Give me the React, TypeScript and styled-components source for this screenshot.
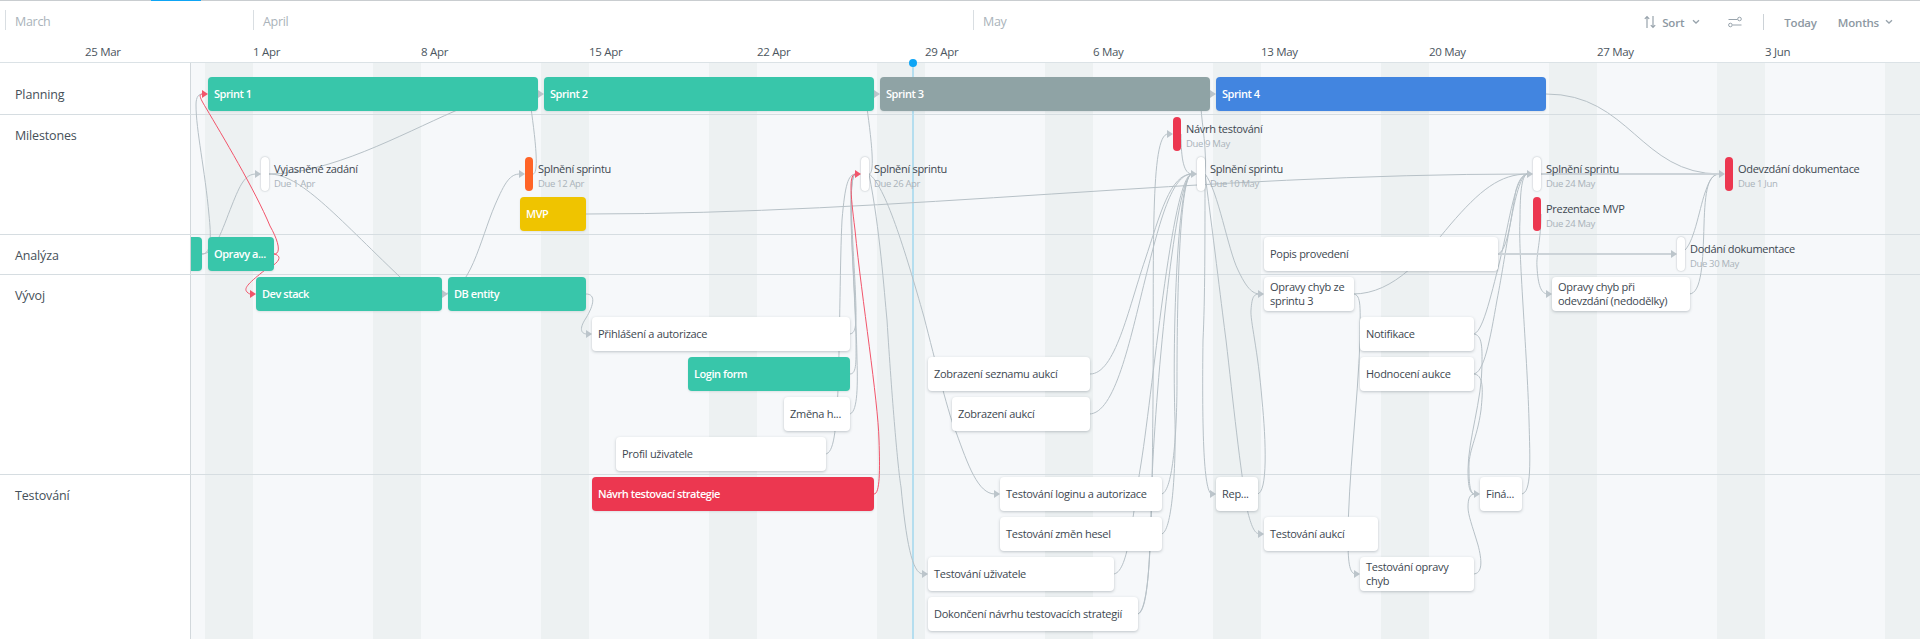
import styled, { createGlobalStyle } from "styled-components";

const TRACK_LEFT = 191;
const LANE_HEIGHT = 40;

type Tone = "green" | "gray" | "blue" | "yellow" | "red" | "white";

interface TaskType {
  label: string;
  x: number;
  end: number;
  lane: number;
  tone: Tone;
  cut?: boolean;
}

interface MilestoneType {
  label: string;
  due: string;
  x: number;
  lane: number;
  tone: "white" | "red" | "orange";
}

interface SwimlaneType {
  name: string;
  height: number;
  labelTop: number;
  laneTop: number;
  tasks: TaskType[];
  milestones: MilestoneType[];
}

const months = [
  { name: "March", width: 248 },
  { name: "April", width: 720 },
  { name: "May" },
];

const weeks = ["25 Mar", "1 Apr", "8 Apr", "15 Apr", "22 Apr", "29 Apr", "6 May", "13 May", "20 May", "27 May", "3 Jun"];

const swimlanes: SwimlaneType[] = [
  {
    name: "Planning",
    height: 51,
    labelTop: 23,
    laneTop: 14,
    tasks: [
      { label: "Sprint 1", x: 208, end: 538, lane: 0, tone: "green" },
      { label: "Sprint 2", x: 544, end: 874, lane: 0, tone: "green" },
      { label: "Sprint 3", x: 880, end: 1210, lane: 0, tone: "gray" },
      { label: "Sprint 4", x: 1216, end: 1546, lane: 0, tone: "blue" },
    ],
    milestones: [],
  },
  {
    name: "Milestones",
    height: 119,
    labelTop: 12,
    laneTop: 2,
    tasks: [{ label: "MVP", x: 520, end: 586, lane: 2, tone: "yellow" }],
    milestones: [
      { label: "Návrh testování", due: "Due 9 May", x: 1173, lane: 0, tone: "red" },
      { label: "Vyjasněné zadání", due: "Due 1 Apr", x: 261, lane: 1, tone: "white" },
      { label: "Splnění sprintu", due: "Due 12 Apr", x: 525, lane: 1, tone: "orange" },
      { label: "Splnění sprintu", due: "Due 26 Apr", x: 861, lane: 1, tone: "white" },
      { label: "Splnění sprintu", due: "Due 10 May", x: 1197, lane: 1, tone: "white" },
      { label: "Splnění sprintu", due: "Due 24 May", x: 1533, lane: 1, tone: "white" },
      { label: "Odevzdání dokumentace", due: "Due 1 Jun", x: 1725, lane: 1, tone: "red" },
      { label: "Prezentace MVP", due: "Due 24 May", x: 1533, lane: 2, tone: "red" },
    ],
  },
  {
    name: "Analýza",
    height: 39,
    labelTop: 12,
    laneTop: 2,
    tasks: [
      { label: "", x: 191, end: 202, lane: 0, tone: "green", cut: true },
      { label: "Opravy a...", x: 208, end: 274, lane: 0, tone: "green" },
      { label: "Popis provedení", x: 1264, end: 1498, lane: 0, tone: "white" },
    ],
    milestones: [{ label: "Dodání dokumentace", due: "Due 30 May", x: 1677, lane: 0, tone: "white" }],
  },
  {
    name: "Vývoj",
    height: 199,
    labelTop: 12,
    laneTop: 2,
    tasks: [
      { label: "Dev stack", x: 256, end: 442, lane: 0, tone: "green" },
      { label: "DB entity", x: 448, end: 586, lane: 0, tone: "green" },
      { label: "Opravy chyb ze sprintu 3", x: 1264, end: 1354, lane: 0, tone: "white" },
      { label: "Opravy chyb při odevzdání (nedodělky)", x: 1552, end: 1690, lane: 0, tone: "white" },
      { label: "Přihlášení a autorizace", x: 592, end: 850, lane: 1, tone: "white" },
      { label: "Notifikace", x: 1360, end: 1474, lane: 1, tone: "white" },
      { label: "Login form", x: 688, end: 850, lane: 2, tone: "green" },
      { label: "Zobrazení seznamu aukcí", x: 928, end: 1090, lane: 2, tone: "white" },
      { label: "Hodnocení aukce", x: 1360, end: 1474, lane: 2, tone: "white" },
      { label: "Změna h...", x: 784, end: 850, lane: 3, tone: "white" },
      { label: "Zobrazení aukcí", x: 952, end: 1090, lane: 3, tone: "white" },
      { label: "Profil uživatele", x: 616, end: 826, lane: 4, tone: "white" },
    ],
    milestones: [],
  },
  {
    name: "Testování",
    height: 164,
    labelTop: 12,
    laneTop: 2,
    tasks: [
      { label: "Návrh testovací strategie", x: 592, end: 874, lane: 0, tone: "red" },
      { label: "Testování loginu a autorizace", x: 1000, end: 1162, lane: 0, tone: "white" },
      { label: "Rep...", x: 1216, end: 1258, lane: 0, tone: "white" },
      { label: "Finá...", x: 1480, end: 1522, lane: 0, tone: "white" },
      { label: "Testování změn hesel", x: 1000, end: 1162, lane: 1, tone: "white" },
      { label: "Testování aukcí", x: 1264, end: 1378, lane: 1, tone: "white" },
      { label: "Testování uživatele", x: 928, end: 1114, lane: 2, tone: "white" },
      { label: "Testování opravy chyb", x: 1360, end: 1474, lane: 2, tone: "white" },
      { label: "Dokončení návrhu testovacích strategií", x: 928, end: 1138, lane: 3, tone: "white" },
    ],
    milestones: [],
  },
];

// dependency curves, in page coordinates
const links = [
  "M202,254 C212,254 211,235 209,215 C205,170 196,130 196,105 C196,96 199,94 203,94",
  "M202,254 C215,254 222,230 232,205 C240,185 245,174 256,174",
  "M269,174 C300,174 335,215 400,277 C420,294 430,294 443,294",
  "M269,174 C330,174 400,135 455,111 C490,96 515,94 539,94",
  "M533,174 C540,174 534,130 531,108 C529,98 532,94 539,94",
  "M442,294 C470,294 480,240 495,205 C505,182 510,174 520,174",
  "M586,294 C596,294 594,305 586,318 C578,330 582,334 587,334",
  "M869,174 C876,174 870,130 867,108 C865,98 868,94 875,94",
  "M869,174 C880,230 884,290 887,320 C892,400 898,470 901,487 C906,540 912,574 923,574",
  "M869,174 C885,185 905,250 924,317 C935,360 950,420 956,432 C968,465 978,494 995,494",
  "M849,334 C856,334 856,325 856,310 C855,260 846,174 856,174",
  "M850,374 C857,374 856,360 856,340 C855,280 845,174 856,174",
  "M849,414 C857,414 858,390 857,360 C856,290 845,174 856,174",
  "M825,454 C834,454 836,430 838,390 C840,330 840,260 842,220 C845,185 848,174 856,174",
  "M586,214 C900,214 1200,174 1528,174",
  "M1090,374 C1115,374 1128,310 1145,260 C1160,215 1170,174 1192,174",
  "M1089,414 C1115,414 1130,340 1145,280 C1160,220 1172,174 1192,174",
  "M1161,494 C1172,494 1177,440 1177,380 C1177,290 1180,174 1192,174",
  "M1161,534 C1172,534 1176,470 1175,420 C1172,330 1178,174 1192,174",
  "M1113,574 C1128,574 1132,520 1140,470 C1152,400 1172,174 1192,174",
  "M1137,614 C1150,614 1150,540 1152,480 C1156,380 1176,174 1192,174",
  "M1137,614 C1152,614 1152,500 1153,400 C1154,250 1150,134 1168,134",
  "M1181,134 C1181,160 1184,174 1192,174",
  "M1205,174 C1205,240 1205,300 1203,340 C1202,420 1203,494 1212,494",
  "M1205,174 C1215,250 1222,310 1226,340 C1233,400 1240,470 1248,513 C1252,528 1255,534 1260,534",
  "M1205,174 C1218,190 1228,250 1238,270 C1246,287 1252,294 1260,294",
  "M1205,174 C1207,150 1202,125 1201,108 C1200,98 1203,94 1211,94",
  "M1257,494 C1268,494 1266,440 1262,400 C1258,350 1250,320 1251,310 C1252,296 1254,294 1260,294",
  "M1353,294 C1395,294 1425,255 1450,225 C1480,190 1500,174 1528,174",
  "M1353,294 C1362,294 1360,310 1360,340 C1358,400 1348,480 1348,540 C1348,565 1350,574 1356,574",
  "M1497,254 C1508,254 1512,210 1516,190 C1520,176 1525,174 1528,174",
  "M1473,334 C1482,334 1490,300 1500,260 C1510,220 1515,174 1528,174",
  "M1473,374 C1484,374 1490,340 1497,300 C1507,250 1515,174 1528,174",
  "M1521,494 C1532,494 1530,460 1529,420 C1527,350 1518,250 1520,220 C1520,190 1522,174 1528,174",
  "M1473,334 C1483,334 1482,350 1482,365 C1482,400 1468,440 1468,470 C1468,488 1470,494 1475,494",
  "M1473,374 C1484,374 1483,390 1481,410 C1477,440 1468,450 1469,470 C1469,488 1471,494 1475,494",
  "M1473,574 C1483,574 1482,560 1478,545 C1472,525 1468,515 1468,507 C1468,498 1470,494 1475,494",
  "M1546,94 C1630,94 1640,174 1720,174",
  "M1685,250 C1695,240 1700,205 1706,190 C1710,178 1714,174 1720,174",
  "M1689,294 C1702,294 1703,260 1704,225 C1705,190 1708,174 1720,174",
  "M1541,214 C1541,240 1536,255 1537,267 C1538,285 1541,294 1548,294",
];

const heavyLinks = ["M1541,174 L1720,174", "M1497,254 L1672,254"];

const redLinks = [
  "M274,254 C282,254 278,240 270,226 C255,190 222,135 206,108 C200,98 198,94 203,94",
  "M274,254 C284,256 278,264 265,270 C250,282 243,288 247,292 C249,294 250,294 251,294",
  "M874,494 C880,494 880,470 879,440 C878,400 862,300 855,230 C850,190 849,174 856,174",
];

const arrows = [
  { x: 544, y: 94 },
  { x: 880, y: 94 },
  { x: 1216, y: 94 },
  { x: 261, y: 174 },
  { x: 525, y: 174 },
  { x: 448, y: 294 },
  { x: 592, y: 334 },
  { x: 1173, y: 134 },
  { x: 1197, y: 174 },
  { x: 1533, y: 174 },
  { x: 1725, y: 174 },
  { x: 1677, y: 254 },
  { x: 1264, y: 294 },
  { x: 1264, y: 534 },
  { x: 1216, y: 494 },
  { x: 1480, y: 494 },
  { x: 1000, y: 494 },
  { x: 928, y: 574 },
  { x: 1360, y: 574 },
  { x: 1552, y: 294 },
  { x: 208, y: 94, red: true },
  { x: 256, y: 294, red: true },
  { x: 861, y: 174, red: true },
];

const SortIcon = () => (
  <svg width="12" height="14" viewBox="0 0 12 14" fill="none" stroke="#98a3ac" strokeWidth="1.2">
    <path d="M3 13V1.5M.8 3.8 3 1.5l2.2 2.3M9 1v11.5M6.8 10.2 9 12.5l2.2-2.3" />
  </svg>
);

const FilterIcon = () => (
  <svg width="14" height="12" viewBox="0 0 14 12" fill="none" stroke="#98a3ac" strokeWidth="1">
    <path d="M.5 3.5h9M4.5 9h9" />
    <circle cx="11.5" cy="3" r="1.8" />
    <circle cx="2.4" cy="9" r="1.8" />
  </svg>
);

const Chevron = () => (
  <svg width="8" height="6" viewBox="0 0 8 6" fill="none" stroke="#98a3ac" strokeWidth="1.3">
    <path d="M1 1.2 4 4l3-2.8" />
  </svg>
);

const App = () => {
  return (
    <Page>
      <GlobalStyle />
      <TopLine>
        <ActiveTab />
      </TopLine>
      <MonthBar>
        {months.map((month) => (
          <Month key={month.name} $width={month.width}>
            {month.name}
          </Month>
        ))}
        <Controls>
          <SortIcon />
          <ControlLabel $left={6} $right={8}>
            Sort
          </ControlLabel>
          <Chevron />
          <FilterButton>
            <FilterIcon />
          </FilterButton>
          <Divider />
          <ControlLabel $left={20} $right={21}>
            Today
          </ControlLabel>
          <ControlLabel $left={0} $right={6}>
            Months
          </ControlLabel>
          <Chevron />
        </Controls>
      </MonthBar>
      <WeekBar>
        {weeks.map((week) => (
          <Week key={week}>{week}</Week>
        ))}
      </WeekBar>
      <Body>
        {swimlanes.map((lane) => (
          <Row key={lane.name} $height={lane.height}>
            <RowLabel $top={lane.labelTop}>{lane.name}</RowLabel>
            <Track>
              {lane.tasks.map((task) => (
                <Task
                  key={task.label + task.x}
                  $x={task.x}
                  $end={task.end}
                  $top={lane.laneTop + task.lane * LANE_HEIGHT}
                  $tone={task.tone}
                  $cut={task.cut}
                >
                  {task.label}
                </Task>
              ))}
              {lane.milestones.map((milestone) => (
                <Milestone
                  key={milestone.due + milestone.x}
                  $x={milestone.x}
                  $top={lane.laneTop + milestone.lane * LANE_HEIGHT}
                >
                  <Pin $tone={milestone.tone} />
                  <MilestoneText>
                    <MilestoneName>{milestone.label}</MilestoneName>
                    <MilestoneDue>{milestone.due}</MilestoneDue>
                  </MilestoneText>
                </Milestone>
              ))}
            </Track>
          </Row>
        ))}
        <TodayLine />
        <TodayDot />
        <Links viewBox="0 63 1920 576">
          {links.map((d) => (
            <Link key={d} d={d} />
          ))}
          {heavyLinks.map((d) => (
            <HeavyLink key={d} d={d} />
          ))}
          {redLinks.map((d) => (
            <RedLink key={d} d={d} />
          ))}
          {arrows.map((arrow) => (
            <Arrow
              key={`${arrow.x}-${arrow.y}`}
              $red={arrow.red}
              points={`${arrow.x},${arrow.y} ${arrow.x - 6},${arrow.y - 4} ${arrow.x - 6},${arrow.y + 4}`}
            />
          ))}
        </Links>
      </Body>
    </Page>
  );
};

const GlobalStyle = createGlobalStyle`
  html, body {
    margin: 0;
    padding: 0;
    background: #fff;
  }
  * {
    box-sizing: border-box;
  }
`;

const Page = styled.div`
  display: flex;
  flex-direction: column;
  width: 1920px;
  height: 639px;
  overflow: hidden;
  font-family: "Open Sans", "Noto Sans", sans-serif;
  color: #3d4750;
`;

const TopLine = styled.div`
  flex: none;
  height: 2px;
  padding-left: 151px;
  background: #fff;
  border-top: 1px solid #c9cdd0;
`;

const ActiveTab = styled.div`
  width: 50px;
  height: 1px;
  margin-top: -1px;
  background: #0ea5f5;
`;

const MonthBar = styled.div`
  flex: none;
  display: flex;
  align-items: flex-start;
  height: 38px;
  padding: 8px 27px 0 5px;
`;

const Month = styled.div<{ $width?: number }>`
  flex: ${(p) => (p.$width ? `0 0 ${p.$width}px` : "1")};
  height: 20px;
  padding-left: 9px;
  border-left: 1px solid #d9dee2;
  font-size: 12.5px;
  line-height: 23px;
  letter-spacing: -0.3px;
  color: #aab3ba;
`;

const Controls = styled.div`
  display: flex;
  align-items: center;
  height: 24px;
  color: #8d98a2;
`;

const ControlLabel = styled.span<{ $left: number; $right: number }>`
  margin: 0 ${(p) => p.$right}px 0 ${(p) => p.$left}px;
  font-size: 11.5px;
  font-weight: 600;
  letter-spacing: -0.2px;
`;

const FilterButton = styled.div`
  display: flex;
  margin: 0 21px 0 28px;
`;

const Divider = styled.div`
  width: 1px;
  height: 16px;
  background: #ccd2d7;
`;

const WeekBar = styled.div`
  flex: none;
  display: flex;
  height: 23px;
  padding-left: 85px;
  border-bottom: 1px solid #dbe2e6;
`;

const Week = styled.div`
  flex: 0 0 168px;
  font-size: 11.5px;
  line-height: 23px;
  letter-spacing: -0.3px;
  color: #4b5660;
`;

const Body = styled.div`
  position: relative;
  flex: 1;
  z-index: 0;
`;

const Row = styled.div<{ $height: number }>`
  display: flex;
  height: ${(p) => p.$height + 1}px;
  border-bottom: 1px solid #d6dde1;

  &:last-of-type {
    border-bottom: 0;
  }
`;

const RowLabel = styled.div<{ $top: number }>`
  flex: 0 0 191px;
  padding: ${(p) => p.$top}px 0 0 15px;
  border-right: 1px solid #d2d8dc;
  background: #fff;
  font-size: 12.5px;
  line-height: 18px;
  letter-spacing: -0.15px;
  color: #465059;
`;

const Track = styled.div`
  position: relative;
  flex: 1;
  background-color: #f6f8fa;
  background-image: linear-gradient(90deg, #edf1f2 48px, transparent 48px);
  background-size: 168px 100%;
  background-position: 14px 0;
`;

const toneColors: Record<Tone, string> = {
  green: "#38c6aa",
  gray: "#8fa3a5",
  blue: "#4285e0",
  yellow: "#efc400",
  red: "#ec3750",
  white: "#fff",
};

const Task = styled.div<{ $x: number; $end: number; $top: number; $tone: Tone; $cut?: boolean }>`
  position: absolute;
  z-index: 2;
  left: ${(p) => p.$x - TRACK_LEFT}px;
  top: ${(p) => p.$top}px;
  display: flex;
  align-items: center;
  width: ${(p) => p.$end - p.$x}px;
  height: 34px;
  padding: 0 5px 0 6px;
  border-radius: ${(p) => (p.$cut ? "0 4px 4px 0" : "4px")};
  background: ${(p) => toneColors[p.$tone]};
  box-shadow: ${(p) => (p.$tone === "white" ? "0 1px 3px rgba(60, 75, 85, 0.3)" : "0 1px 2px rgba(60, 75, 85, 0.12)")};
  font-size: 11px;
  line-height: 14px;
  letter-spacing: ${(p) => (p.$tone === "white" ? "-0.28px" : "-0.45px")};
  font-weight: ${(p) => (p.$tone === "white" ? 400 : 600)};
  color: ${(p) => (p.$tone === "white" ? "#3d4750" : "#fff")};
`;

const Milestone = styled.div<{ $x: number; $top: number }>`
  position: absolute;
  z-index: 2;
  left: ${(p) => p.$x - TRACK_LEFT}px;
  top: ${(p) => p.$top}px;
  display: flex;
  gap: 5px;
  white-space: nowrap;
`;

const pinColors = { white: "#fff", red: "#ec3750", orange: "#ff6427" };

const Pin = styled.div<{ $tone: keyof typeof pinColors }>`
  flex: none;
  width: 8px;
  height: 34px;
  border-radius: 4px;
  background: ${(p) => pinColors[p.$tone]};
  box-shadow: ${(p) => (p.$tone === "white" ? "0 0 2px rgba(60, 75, 85, 0.4)" : "none")};
`;

const MilestoneText = styled.div`
  display: flex;
  flex-direction: column;
  padding-top: 4px;
`;

const MilestoneName = styled.span`
  font-size: 11px;
  line-height: 15px;
  letter-spacing: -0.3px;
  color: #3d4750;
`;

const MilestoneDue = styled.span`
  font-size: 9.5px;
  line-height: 15px;
  letter-spacing: -0.35px;
  color: #aab3ba;
`;

const TodayLine = styled.div`
  position: absolute;
  z-index: 1;
  left: 912px;
  top: 0;
  bottom: 0;
  width: 2px;
  background: #b5deef;
`;

const TodayDot = styled.div`
  position: absolute;
  z-index: 3;
  left: 909px;
  top: -4px;
  width: 8px;
  height: 8px;
  border-radius: 50%;
  background: #0ea5f5;
`;

const Links = styled.svg`
  position: absolute;
  z-index: 1;
  left: 0;
  top: 0;
  width: 1920px;
  height: 576px;
  pointer-events: none;
`;

const Link = styled.path`
  fill: none;
  stroke: #b7c1c7;
  stroke-width: 1;
`;

const HeavyLink = styled(Link)`
  stroke: #ccd3d8;
  stroke-width: 2;
`;

const RedLink = styled(Link)`
  stroke: #f2556b;
`;

const Arrow = styled.polygon<{ $red?: boolean }>`
  fill: ${(p) => (p.$red ? "#f2556b" : "#bcc5cb")};
`;

export default App;
